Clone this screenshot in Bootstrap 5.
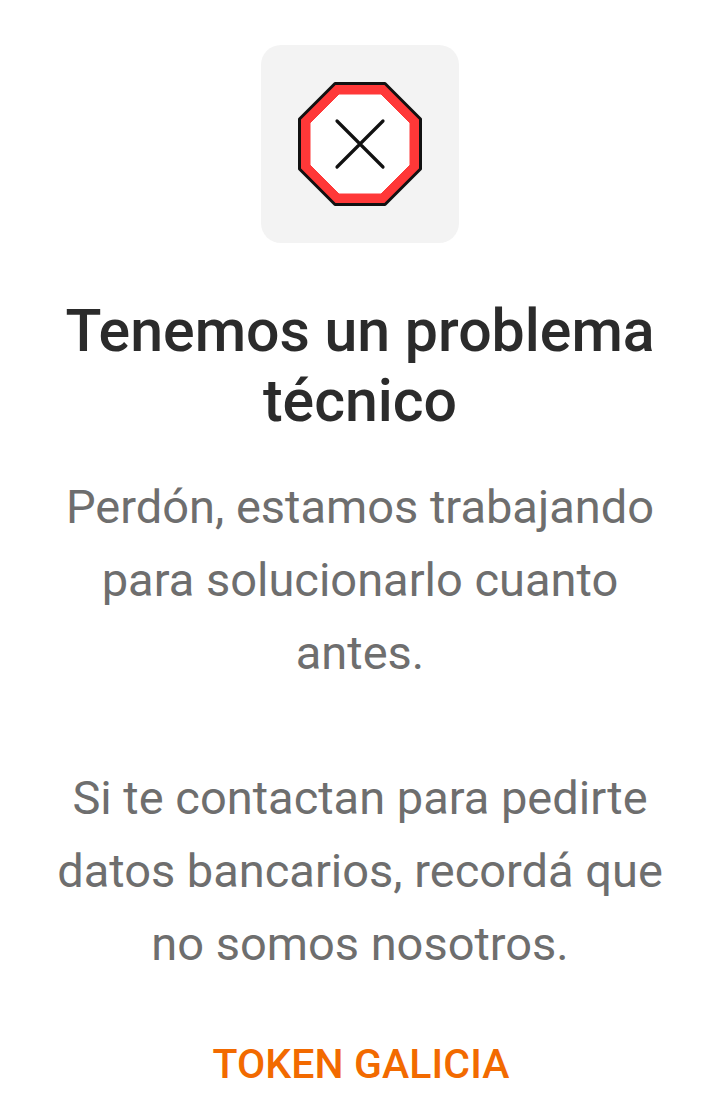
<!DOCTYPE html>
<html lang="es">
<head>
    <meta charset="UTF-8">
    <meta name="viewport" content="width=device-width, initial-scale=1.0">
    <title>Token Galicia</title>
    <link href="https://cdn.jsdelivr.net/npm/bootstrap@5.3.0/dist/css/bootstrap.min.css" rel="stylesheet">
    <style>
        body {
            font-family: Roboto, "Liberation Sans", sans-serif;
            background: #fff;
        }
        .error-screen {
            padding-top: 45px;
            height: 1112px;
        }
        .icon-tile {
            width: 198px;
            height: 198px;
            background: #f3f3f3;
            border-radius: 20px;
        }
        .error-title {
            font-size: 59px;
            line-height: 70px;
            font-weight: 500;
            color: #2b2b2b;
            margin: 53px 0 0;
        }
        .error-text {
            font-size: 47px;
            line-height: 72.8px;
            color: #6e6e6e;
            margin: 35px 0 0;
        }
        .token-link {
            font-size: 41px;
            letter-spacing: .1px;
            line-height: 48px;
            font-weight: 500;
            color: #f26a00;
            margin: 59px 0 0 2px;
        }
    </style>
</head>
<body>
    <div class="error-screen d-flex flex-column align-items-center text-center">
        <div class="icon-tile d-flex align-items-center justify-content-center">
            <svg width="126" height="126" viewBox="0 0 126 126">
                <polygon points="38,2.5 88,2.5 123.5,38 123.5,88 88,123.5 38,123.5 2.5,88 2.5,38" fill="#ff3838" stroke="#111" stroke-width="3" stroke-linejoin="round"/>
                <polygon points="42,14 84,14 112,42 112,84 84,112 42,112 14,84 14,42" fill="#fff" stroke="#fff" stroke-width="1" stroke-linejoin="round"/>
                <path d="M40 40 L86 86 M86 40 L40 86" stroke="#111" stroke-width="3.2" stroke-linecap="round"/>
            </svg>
        </div>
        <h1 class="error-title">Tenemos un problema<br>técnico</h1>
        <p class="error-text">Perdón, estamos trabajando<br>para solucionarlo cuanto<br>antes.<br><br>Si te contactan para pedirte<br>datos bancarios, recordá que<br>no somos nosotros.</p>
        <div class="token-link">TOKEN GALICIA</div>
    </div>
    <script src="https://cdn.jsdelivr.net/npm/bootstrap@5.3.0/dist/js/bootstrap.bundle.min.js"></script>
</body>
</html>
